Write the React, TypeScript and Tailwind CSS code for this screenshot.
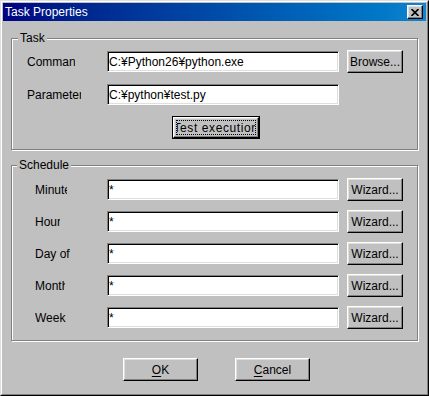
import React from 'react';

const raised =
  'border border-t-white border-l-white border-b-black border-r-black bg-[#c0c0c0] shadow-[inset_-1px_-1px_0_#808080,inset_1px_1px_0_#dfdfdf]';
const sunken =
  'h-[21px] w-[232px] bg-white border border-t-[#808080] border-l-[#808080] border-b-white border-r-white shadow-[inset_1px_1px_0_#000,inset_-1px_-1px_0_#dfdfdf] px-[1px] text-[12px] text-black outline-none';
const group = 'border border-[#808080] shadow-[1px_1px_0_#fff,inset_1px_1px_0_#fff] p-0 m-0 min-w-0';

// label text is cut short, like the original dialog
const Label = ({ text, clip, pad }: { text: string; clip: number; pad: string }) => (
  <div className={`w-[95px] shrink-0 ${pad}`}>
    <span className="block overflow-hidden whitespace-nowrap leading-[14px]" style={{ width: clip }}>
      {text}
    </span>
  </div>
);

const schedule = [
  { label: 'Minute', clip: 32 },
  { label: 'Hour', clip: 25 },
  { label: 'Day of month', clip: 36 },
  { label: 'Month', clip: 30 },
  { label: 'Week', clip: 36 },
];

export default function App() {
  return (
    <div className="w-[429px] h-[396px] border border-t-[#dfdfdf] border-l-[#dfdfdf] border-b-black border-r-black font-['Liberation_Sans','Noto_Sans_CJK_JP',sans-serif] text-[12px] text-black">
      <div className="h-full border border-t-white border-l-white border-b-[#808080] border-r-[#808080] bg-[#c0c0c0] p-[1px]">
        {/* title bar */}
        <div className="h-[18px] flex items-center justify-between pl-[2px] pr-[3px] bg-gradient-to-r from-[#000080] to-[#1084d0]">
          <span className="text-white leading-[14px]">Task Properties</span>
          <button className={`${raised} w-[16px] h-[14px] flex items-center justify-center`}>
            <svg width="8" height="7" viewBox="0 0 8 7">
              <path d="M0.5 0 L7.5 7 M7.5 0 L0.5 7" stroke="#000" strokeWidth="1.6" />
            </svg>
          </button>
        </div>

        <div className="px-[8px]">
          {/* Task */}
          <fieldset className={`${group} mt-[10px]`}>
            <legend className="ml-[6px] px-[2px] bg-[#c0c0c0] leading-[14px]">Task</legend>
            <div className="flex flex-col gap-[10px] pt-[5px] pb-[10px]">
              <div className="flex items-center h-[23px]">
                <Label text="Command" clip={48} pad="pl-[15px]" />
                <input className={sunken} defaultValue="C:¥Python26¥python.exe" readOnly />
                <button className={`${raised} ml-[8px] w-[56px] h-[23px]`}>Browse...</button>
              </div>
              <div className="flex items-center h-[23px]">
                <Label text="Parameter" clip={54} pad="pl-[15px]" />
                <input className={sunken} defaultValue="C:¥python¥test.py" readOnly />
              </div>
              <div className="flex items-center h-[23px]">
                <button className="ml-[160px] w-[88px] h-[23px] border border-black p-0">
                  <span className={`${raised} flex items-center justify-center w-full h-full p-[2px]`}>
                    <span className="flex items-center justify-center w-full h-full border border-dotted border-black overflow-hidden">
                      <span className="whitespace-nowrap tracking-[0.6px]">Test execution</span>
                    </span>
                  </span>
                </button>
              </div>
            </div>
          </fieldset>

          {/* Schedule */}
          <fieldset className={`${group} mt-[8px]`}>
            <legend className="ml-[5px] px-[2px] bg-[#c0c0c0] leading-[14px]">Schedule</legend>
            <div className="flex flex-col gap-[9px] pt-[6px] pb-[11px]">
              {schedule.map((s) => (
                <div key={s.label} className="flex items-center h-[23px]">
                  <Label text={s.label} clip={s.clip} pad="pl-[23px]" />
                  <input className={sunken} defaultValue="*" readOnly />
                  <button className={`${raised} ml-[8px] w-[56px] h-[23px]`}>Wizard...</button>
                </div>
              ))}
            </div>
          </fieldset>

          <div className="flex gap-[37px] pl-[112px] mt-[17px]">
            <button className={`${raised} w-[75px] h-[23px]`}>
              <span className="underline underline-offset-2">O</span>K
            </button>
            <button className={`${raised} w-[75px] h-[23px]`}>
              <span className="underline underline-offset-2">C</span>ancel
            </button>
          </div>
        </div>
      </div>
    </div>
  );
}
